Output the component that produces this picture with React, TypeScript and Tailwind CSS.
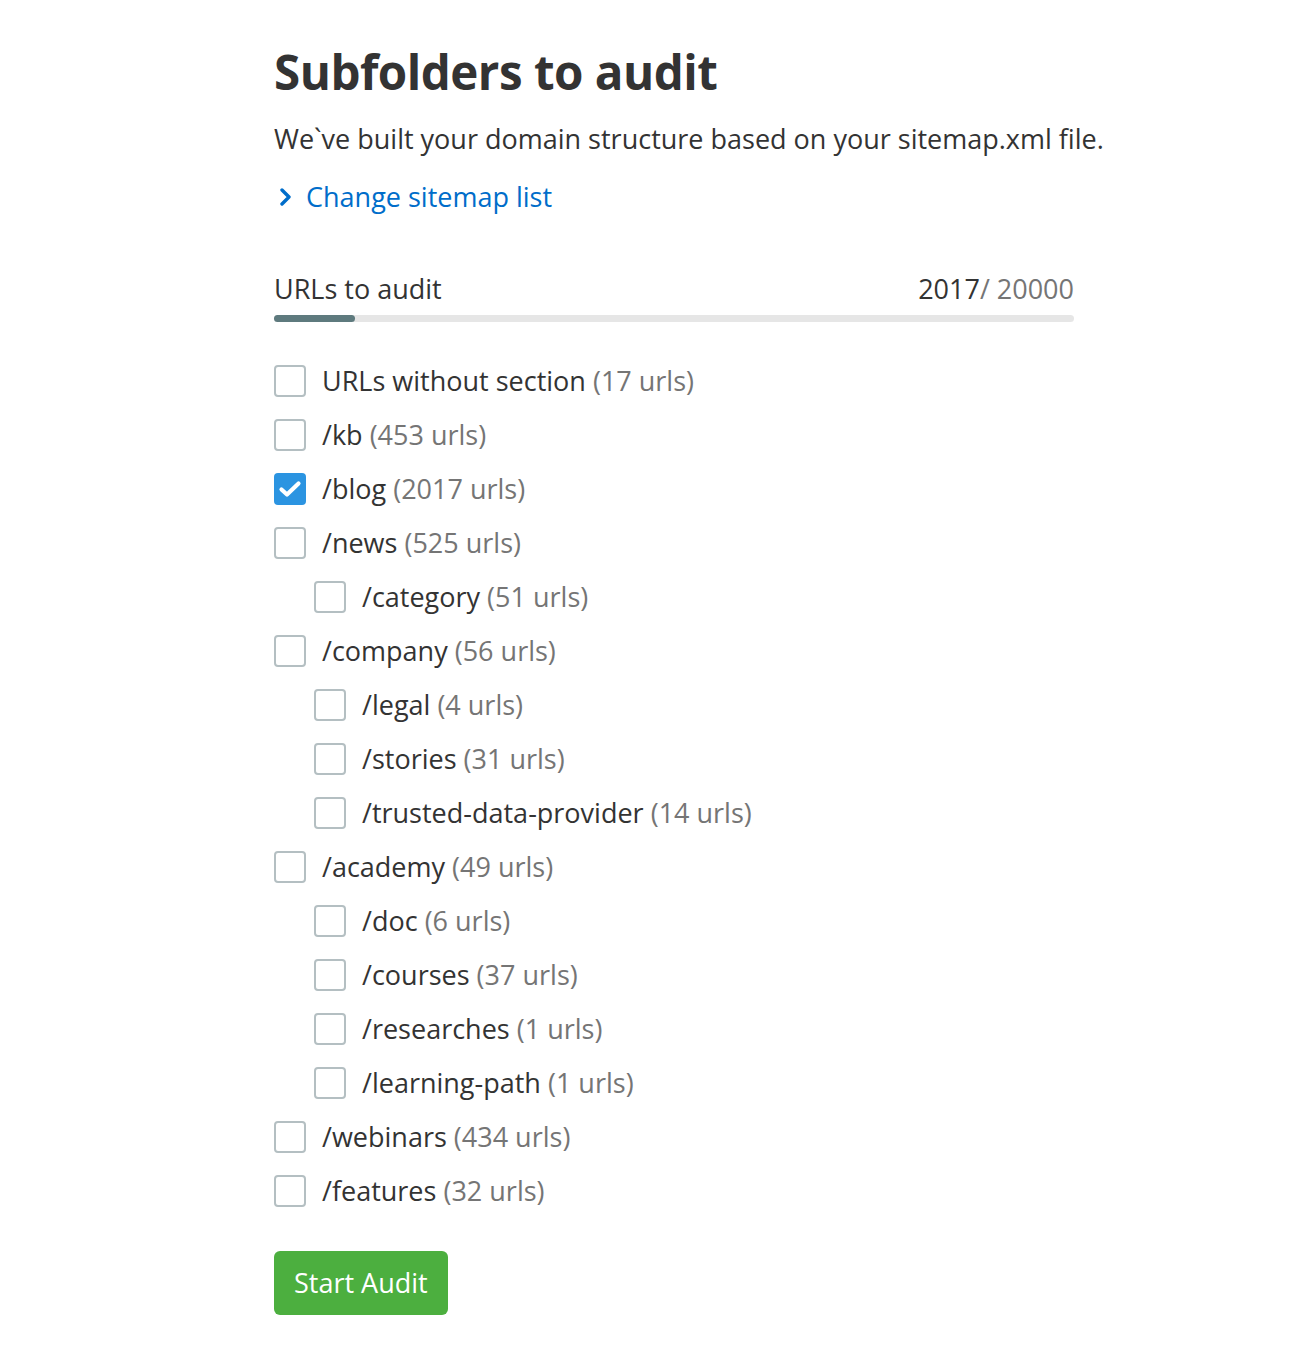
const rows: { name: string; count: number; level: number; checked?: boolean }[] = [
  { name: "URLs without section", count: 17, level: 0 },
  { name: "/kb", count: 453, level: 0 },
  { name: "/blog", count: 2017, level: 0, checked: true },
  { name: "/news", count: 525, level: 0 },
  { name: "/category", count: 51, level: 1 },
  { name: "/company", count: 56, level: 0 },
  { name: "/legal", count: 4, level: 1 },
  { name: "/stories", count: 31, level: 1 },
  { name: "/trusted-data-provider", count: 14, level: 1 },
  { name: "/academy", count: 49, level: 0 },
  { name: "/doc", count: 6, level: 1 },
  { name: "/courses", count: 37, level: 1 },
  { name: "/researches", count: 1, level: 1 },
  { name: "/learning-path", count: 1, level: 1 },
  { name: "/webinars", count: 434, level: 0 },
  { name: "/features", count: 32, level: 0 },
];

function Checkbox({ checked }: { checked?: boolean }) {
  if (checked) {
    return (
      <span className="flex h-8 w-8 shrink-0 items-center justify-center rounded-[4px] bg-[#2b94e1]">
        <svg width="24" height="18" viewBox="0 0 24 18" fill="none">
          <path d="M3.5 9.5l5.5 5L20.5 3.5" stroke="white" strokeWidth="4.2" strokeLinecap="round" strokeLinejoin="round" />
        </svg>
      </span>
    );
  }
  return <span className="h-8 w-8 shrink-0 rounded-[4px] border-2 border-[#b4bfc2] bg-white" />;
}

export default function App() {
  return (
    <main className="min-h-[1370px] bg-white font-['Open_Sans',sans-serif] text-[#333333]">
      <div className="ml-[274px] w-[800px] pt-[42px]">
        <h1 className="text-[47.5px] font-bold leading-[60px] tracking-[-0.5px]">Subfolders to audit</h1>
        <p className="mt-[19px] whitespace-nowrap text-[27px] leading-9">
          We`ve built your domain structure based on your sitemap.xml file.
        </p>
        <a href="#" className="mt-[22px] flex items-center gap-[15px] text-[27px] leading-9 text-[#006dca]">
          <svg width="12" height="20" viewBox="0 0 12 20" fill="none" className="ml-[5px]">
            <path d="M3 3l7 7-7 7" stroke="#006dca" strokeWidth="3.4" strokeLinecap="round" strokeLinejoin="round" />
          </svg>
          Change sitemap list
        </a>

        <div className="mt-[56px] flex items-baseline justify-between text-[27px] leading-9">
          <span>URLs to audit</span>
          <span>
            2017<span className="text-[#757575]">/ 20000</span>
          </span>
        </div>
        <div className="mt-[8px] h-[7px] w-full rounded-full bg-[#e6e6e6]">
          <div className="h-full w-[81px] rounded-full bg-[#5e7a7e]" />
        </div>

        <ul className="mt-[43px] flex flex-col gap-[22px]">
          {rows.map((r) => (
            <li key={r.name} className={`flex h-8 items-center gap-4 ${r.level ? "pl-10" : ""}`}>
              <Checkbox checked={r.checked} />
              <span className="text-[27px] leading-8 whitespace-nowrap">
                {r.name} <span className="text-[#757575]">({r.count} urls)</span>
              </span>
            </li>
          ))}
        </ul>

        <button className="mt-[44px] h-16 rounded-[6px] bg-[#4caf3f] px-5 text-[27px] font-medium text-white">
          Start Audit
        </button>
      </div>
    </main>
  );
}
